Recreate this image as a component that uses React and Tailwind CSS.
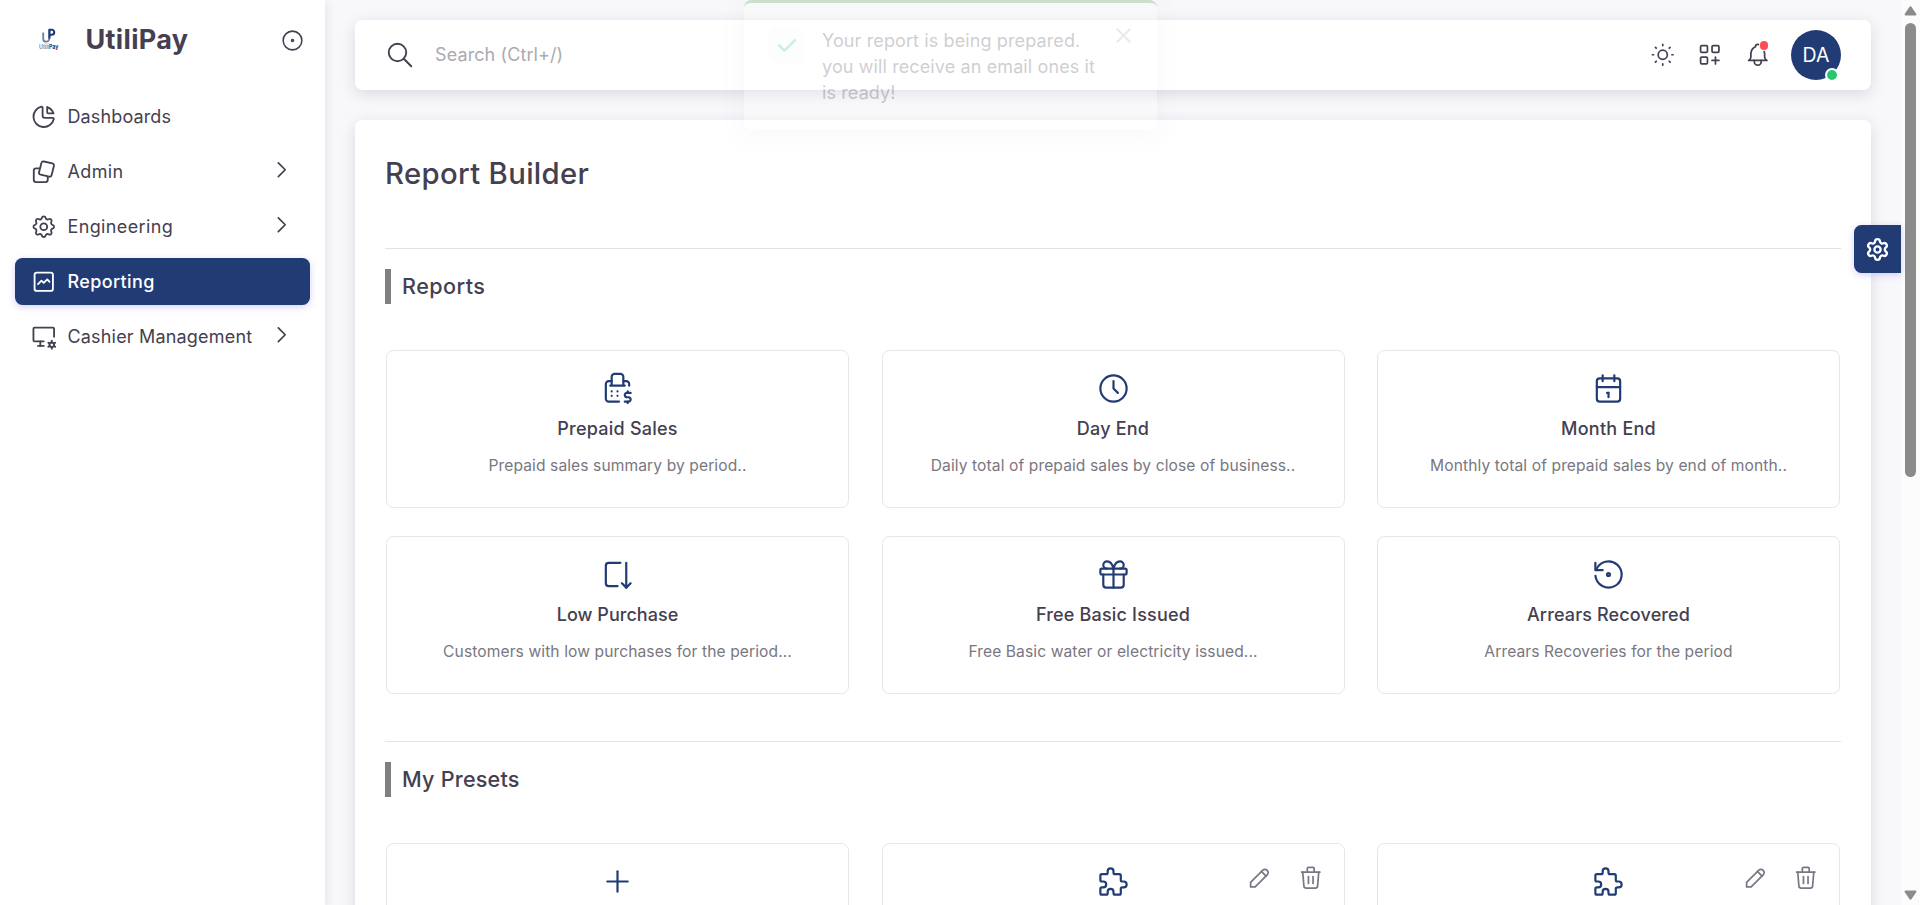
import {
  TbChartPie, TbSettings, TbGraph, TbDeviceDesktopCog, TbChevronRight, TbCircleDot, TbSearch, TbSun,
  TbLayoutGridAdd, TbBell, TbCashRegister, TbClock, TbCalendar, TbArrowAutofitDown, TbGift, TbRestore,
  TbPlus, TbPuzzle, TbPencil, TbTrash, TbCheck, TbX,
} from "react-icons/tb";
import { Settings } from "lucide-react";

function SquaresIcon({ size, strokeWidth }) {
  return (
    <svg width={size} height={size} viewBox="0 0 24 24" fill="none" stroke="currentColor" strokeWidth={strokeWidth} strokeLinecap="round" strokeLinejoin="round">
      <path d="M12.1 3.05l7.4 1.6a1.8 1.8 0 0 1 1.4 2.15l-2 8.1a1.8 1.8 0 0 1 -2.15 1.35l-7.5 -1.7a1.8 1.8 0 0 1 -1.35 -2.15l2.05 -8a1.8 1.8 0 0 1 2.15 -1.35z" />
      <path d="M8 9h-2.7a2 2 0 0 0 -2 2v8a2 2 0 0 0 2 2h8.2a2 2 0 0 0 2 -2v-2.6" />
    </svg>
  );
}

const menu = [
  { label: "Dashboards", icon: TbChartPie, track: "tracking-[0.13px]" },
  { label: "Admin", icon: SquaresIcon, arrow: true, track: "tracking-[0.35px]" },
  { label: "Engineering", icon: TbSettings, arrow: true, track: "tracking-[0.36px]" },
  { label: "Reporting", icon: TbGraph, active: true, track: "tracking-[0.36px]" },
  { label: "Cashier Management", icon: TbDeviceDesktopCog, arrow: true, track: "tracking-[0.18px]" },
];

const reports = [
  { title: "Prepaid Sales", track: "tracking-[0.23px]", text: "Prepaid sales summary by period..", icon: TbCashRegister },
  { title: "Day End", track: "tracking-[0.2px]", text: "Daily total of prepaid sales by close of business..", icon: TbClock },
  { title: "Month End", track: "tracking-[0.25px]", text: "Monthly total of prepaid sales by end of month..", icon: TbCalendar },
  { title: "Low Purchase", track: "tracking-[0.04px]", text: "Customers with low purchases for the period...", icon: TbArrowAutofitDown },
  { title: "Free Basic Issued", track: "tracking-[0.18px]", text: "Free Basic water or electricity issued...", icon: TbGift },
  { title: "Arrears Recovered", track: "tracking-[0.14px]", text: "Arrears Recoveries for the period", icon: TbRestore },
];

function Logo() {
  return (
    <svg width="20" height="24" viewBox="0 0 20 24" fill="none">
      <path d="M4.2 4.5v6.2a3 3 0 0 0 6 0v-8.900" stroke="#6c80a6" strokeWidth="1.800" />
      <path d="M10.500 10.500v-8.700h2.200a2.500 2.500 0 0 1 0 5h-2" stroke="#213b74" strokeWidth="2.100" />
      <text x="0" y="21.300" fontSize="6" fontFamily="Inter, sans-serif" fontWeight="600" fill="#7b8699" textLength="10" lengthAdjust="spacingAndGlyphs">Utili</text>
      <text x="10" y="21.300" fontSize="6" fontFamily="Inter, sans-serif" fontWeight="700" fill="#213b74" textLength="9.500" lengthAdjust="spacingAndGlyphs">Pay</text>
    </svg>
  );
}

function Sidebar() {
  return (
    <aside className="relative z-10 h-full w-[325px] shrink-0 bg-white shadow-[0_2px_10px_rgba(47,43,61,0.12)]">
      <header className="flex h-[79px] items-center pr-5 pl-[39px]">
        <Logo />
        <span className="ml-[26.5px] text-[27px] leading-8 font-bold tracking-[0.34px]">UtiliPay</span>
        <TbCircleDot className="mt-px ml-auto" size={25} strokeWidth={1.5} />
      </header>
      <nav className="flex flex-col gap-2 px-[15px] pt-[14px]">
        {menu.map(({ label, icon: Icon, arrow, active, track }) => (
          <a
            key={label}
            className={
              active
                ? "flex h-[47px] items-center rounded-[7.5px] bg-[#213b74] pl-[15px] font-medium text-white shadow-[0_2px_7px_rgba(115,103,240,0.3)]"
                : "flex h-[47px] items-center rounded-[7.5px] pl-[15px]"
            }
          >
            <Icon size={27.5} strokeWidth={1.6} />
            <span className={"ml-[10px] " + track}>{label}</span>
            {arrow && <TbChevronRight className="mr-[15px] mb-[3px] ml-auto" size={27.5} strokeWidth={1.5} />}
          </a>
        ))}
      </nav>
    </aside>
  );
}

function Navbar() {
  return (
    <header className="flex h-[70px] shrink-0 items-center rounded-[7.5px] bg-white px-[30px] shadow-[0_4px_15px_rgba(47,43,61,0.14)]">
      <TbSearch size={30} strokeWidth={1.5} />
      <span className="ml-5 tracking-[0.1px] text-[#acaab1]">Search (Ctrl+/)</span>
      <div className="ml-auto flex items-center">
        <TbSun size={27.5} strokeWidth={1.5} />
        <TbLayoutGridAdd className="ml-5" size={27.5} strokeWidth={1.5} />
        <span className="relative ml-5">
          <TbBell size={27.5} strokeWidth={1.5} />
          <i className="absolute top-0 right-[3px] size-[8.5px] rounded-full bg-[#ff4c51] ring-1 ring-white" />
        </span>
        <span className="relative ml-5 flex size-[50px] items-center justify-center rounded-full bg-[#213b74] text-white">
          <span className="text-[19.5px]">DA</span>
          <i className="absolute right-[2px] bottom-[-2px] size-[14px] rounded-full border-2 border-white bg-[#28c76f]" />
        </span>
      </div>
    </header>
  );
}

function SectionTitle({ children, track }) {
  return (
    <div className="border-t border-[#e3e3e5] pt-5">
      <h5 className={"h-[35px] border-l-[6px] border-[#808080] pl-[11px] text-[21.6px] leading-[35px] font-medium " + track}>{children}</h5>
    </div>
  );
}

function ReportCard({ title, track, text, icon: Icon }) {
  return (
    <article className="flex h-[158px] flex-col items-center rounded-[7.5px] border border-[#e6e6e8] pt-[19.5px]">
      <Icon className="text-[#213b74]" size={35} strokeWidth={1.5} />
      <h6 className={"mt-[10px] h-[26px] leading-[26px] font-medium " + track}>{title}</h6>
      <p className="mt-[12px] text-[15.6px] leading-6 tracking-[0.095px] text-[#797782]">{text}</p>
    </article>
  );
}

function PresetCard({ icon: Icon, actions }) {
  return (
    <article className="relative flex h-[158px] flex-col items-center rounded-[7.5px] border border-[#e6e6e8] pt-[19.5px]">
      <Icon className="text-[#213b74]" size={35} strokeWidth={1.5} />
      {actions && (
        <div className="absolute top-[19.5px] right-[19.5px] flex gap-[23px] text-[#797782]">
          <TbPencil size={27.5} strokeWidth={1.5} />
          <TbTrash size={27.5} strokeWidth={1.5} />
        </div>
      )}
    </article>
  );
}

function Toast() {
  return (
    <div className="absolute top-0 left-[744px] z-20 flex h-[130px] w-[413px] rounded-[7.5px] border-t-[3px] border-[#489c48] bg-white pt-[25px] pr-[21px] pl-[25px] opacity-25 shadow-[0_5px_22px_rgba(47,43,61,0.12)]">
      <span className="flex size-[34.5px] items-center justify-center rounded-[7.5px] bg-[#28c76f]/5 text-[#28c76f]">
        <TbCheck size={25} strokeWidth={2.4} />
      </span>
      <p className="ml-[18.5px] leading-[26px] tracking-[0.114px]">
        Your report is being prepared.
        <br />
        you will receive an email ones it
        <br />
        is ready!
      </p>
      <TbX className="mt-[-5px] ml-auto text-[#a9a8b0]" size={25} strokeWidth={1.8} />
    </div>
  );
}

function Scrollbar() {
  return (
    <div className="flex w-[19px] shrink-0 flex-col items-center bg-[#fcfcfc] text-[#8b8b8b]">
      <svg className="mt-[6px]" width="13" height="10" viewBox="0 0 13 10" fill="currentColor">
        <path d="M5.4 .9q1.1-1.3 2.2 0l4.6 6.8q.6 1.6-1 1.8h-9.4q-1.600-.2-1-1.800z" />
      </svg>
      <div className="mt-[7px] h-[454px] w-[11px] rounded-full bg-[#8b8b8b]" />
      <svg className="mt-auto mb-[5px]" width="13" height="10" viewBox="0 0 13 10" fill="currentColor">
        <path d="M5.4 9.1q1.1 1.3 2.2 0l4.6-6.800q.6-1.600-1-1.800h-9.400q-1.600 .2-1 1.800z" />
      </svg>
    </div>
  );
}

export default function App() {
  return (
    <div className="relative flex h-[905px] w-[1920px] overflow-hidden bg-[#f8f7fa] font-[Inter,sans-serif] text-[18px] leading-[26px] text-[#444050]">
      <Sidebar />
      <main className="flex min-w-0 flex-1 flex-col gap-[30px] px-[30px] pt-5">
        <Navbar />
        <section className="h-[900px] shrink-0 rounded-[7.5px] bg-white px-[30px] pt-[36px] shadow-[0_4px_15px_rgba(47,43,61,0.14)]">
          <h4 className="h-[92px] text-[29.3px] leading-9 font-medium tracking-[0.34px]">Report Builder</h4>
          <SectionTitle track="tracking-[0.45px]">Reports</SectionTitle>
          <div className="mt-[46px] grid grid-cols-3 gap-x-[32.5px] gap-y-7 px-px">
            {reports.map((r) => (
              <ReportCard key={r.title} {...r} />
            ))}
          </div>
          <div className="mt-[47px]">
            <SectionTitle track="tracking-[0.21px]">My Presets</SectionTitle>
          </div>
          <div className="mt-[46px] grid grid-cols-3 gap-x-[32.5px] px-px">
            <PresetCard icon={TbPlus} />
            <PresetCard icon={TbPuzzle} actions />
            <PresetCard icon={TbPuzzle} actions />
          </div>
        </section>
      </main>
      <Scrollbar />
      <Toast />
      <button className="absolute top-[225px] right-[19px] z-10 flex h-12 w-[47.5px] items-center justify-center rounded-l-[7.5px] bg-[#213b74] text-white shadow-[0_2px_7px_rgba(115,103,240,0.3)]">
        <Settings size={25} strokeWidth={2.2} />
      </button>
    </div>
  );
}
